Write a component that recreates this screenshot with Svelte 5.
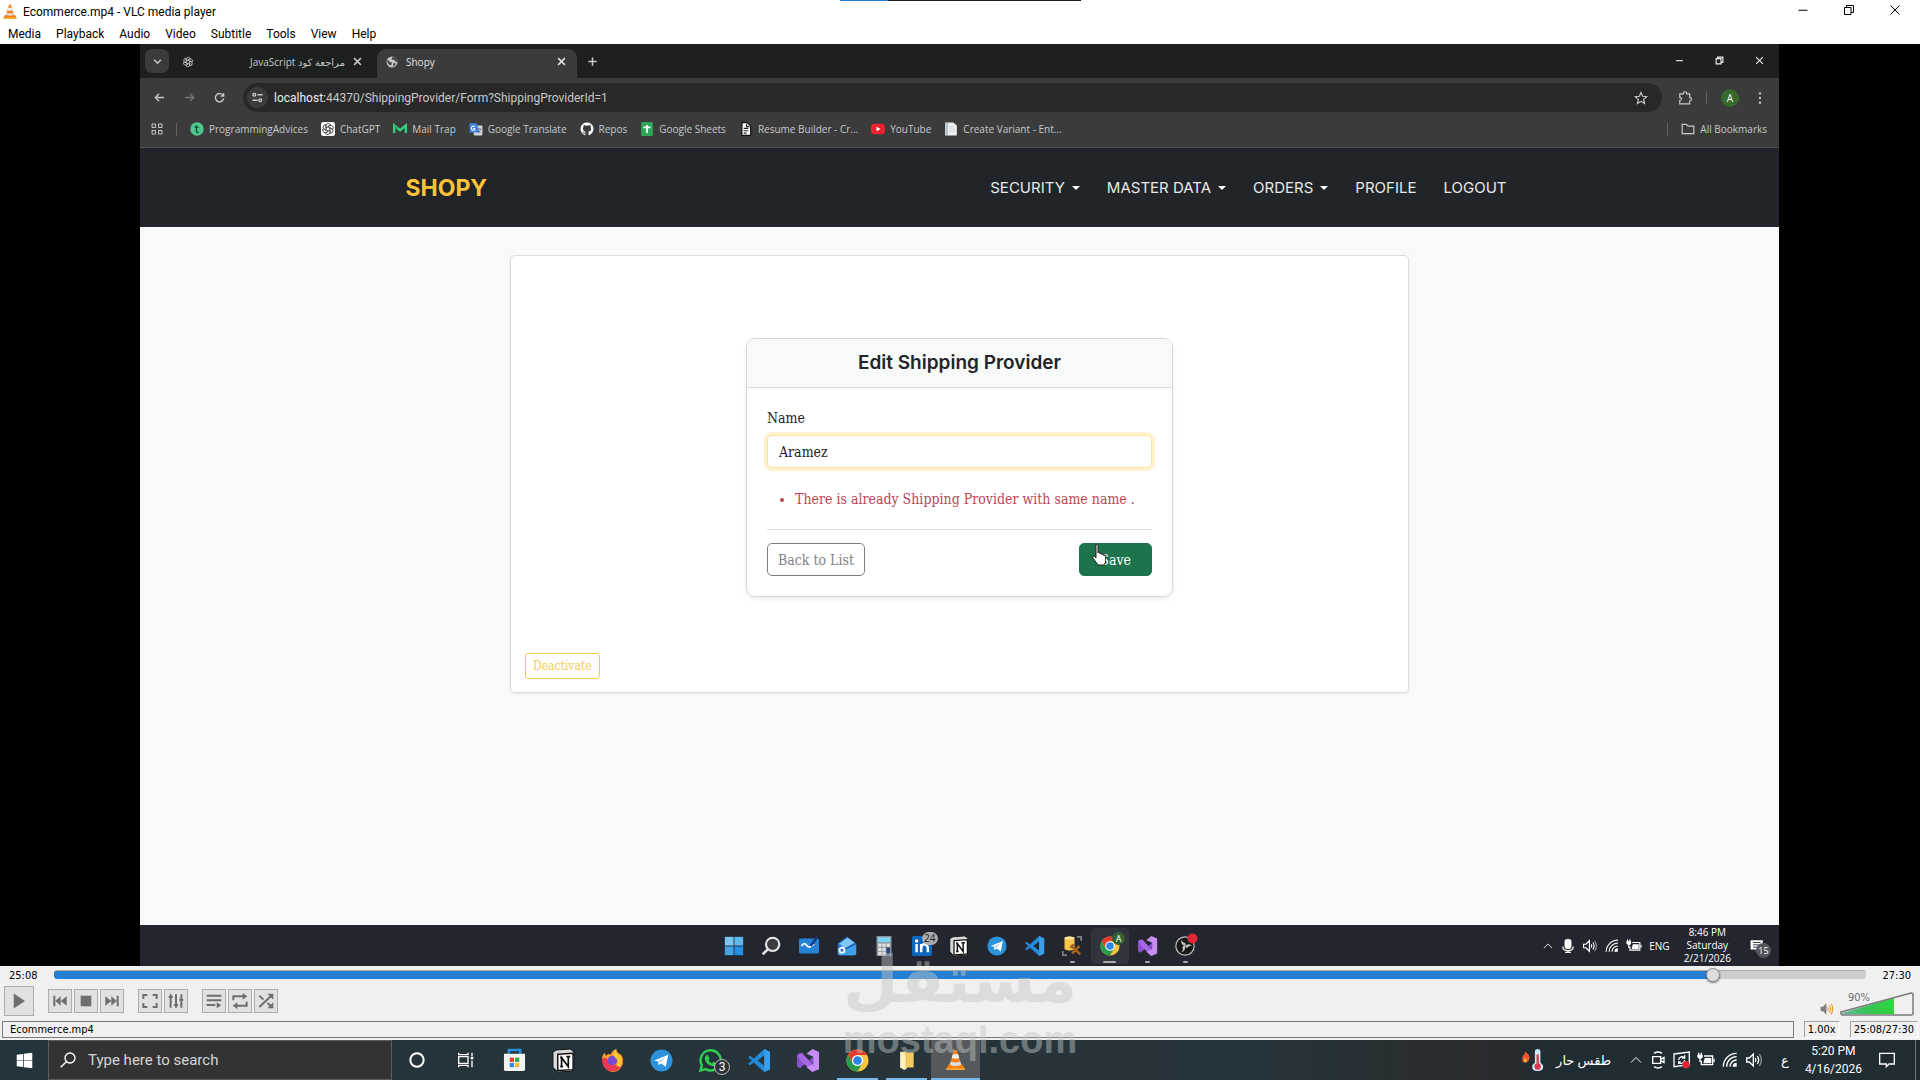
<script>
  const vlcMenu = ["Media", "Playback", "Audio", "Video", "Subtitle", "Tools", "View", "Help"];

  const bookmarks = [
    { icon: "advices", title: "ProgrammingAdvices" },
    { icon: "chatgpt", title: "ChatGPT" },
    { icon: "mailtrap", title: "Mail Trap" },
    { icon: "translate", title: "Google Translate" },
    { icon: "github", title: "Repos" },
    { icon: "sheets", title: "Google Sheets" },
    { icon: "resume", title: "Resume Builder - Cr..." },
    { icon: "youtube", title: "YouTube" },
    { icon: "page", title: "Create Variant - Ent..." },
  ];

  const siteLinks = [
    { title: "SECURITY", dropdown: true },
    { title: "MASTER DATA", dropdown: true },
    { title: "ORDERS", dropdown: true },
    { title: "PROFILE" },
    { title: "LOGOUT" },
  ];

  const recordedApps = [
    { icon: "win11" },
    { icon: "lens" },
    { icon: "whiteboard" },
    { icon: "mail" },
    { icon: "calc" },
    { icon: "linkedin", badge: "24", kind: "grey" },
    { icon: "notion" },
    { icon: "telegram" },
    { icon: "vscode" },
    { icon: "dbtools", running: true },
    { icon: "chrome", running: true, active: true, badge: "A", kind: "green" },
    { icon: "vs", running: true },
    { icon: "obs", running: true },
  ];

  const vlcGroups = [
    ["prev", "stop", "next"],
    ["fullscreen", "equalizer"],
    ["playlist", "loop", "shuffle"],
  ];

  const pinnedApps = [
    { icon: "cortana" },
    { icon: "taskview" },
    { icon: "store" },
    { icon: "notion" },
    { icon: "firefox" },
    { icon: "telegram" },
    { icon: "whatsapp", badge: "3" },
    { icon: "vscode" },
    { icon: "vs" },
    { icon: "chrome", running: true },
    { icon: "folder", running: true },
    { icon: "cone", running: true, active: true },
  ];

  let providerName = $state("Aramez");
  let search = $state("");
  let position = $state(1516);
  const duration = 1650;
  let played = $derived((position / duration) * 100);
</script>

{#snippet icon(name)}
  <svg class="icon {name}" viewBox="0 0 24 24" aria-hidden="true">
    {#if name === "cone"}
      <path d="M3 19l2-3h14l2 3 1 3H2z" fill="#f57c00" />
      <path d="M10.500 1h3l5 17q-6.500 3-13 0z" fill="#f58220" />
      <path d="M9.200 5.500h5.600l1.200 4q-4 1.500-8 0z" fill="#eee" />
      <path d="M7 13q5 2 10 0l1 3.500q-6 2.500-12 0z" fill="#ddd" />
      <path d="M2.500 21h19" stroke="#ffb43c" stroke-width="1.500" />
    {:else if name === "minimize"}
      <path d="M3 12.500h18" class="line" />
    {:else if name === "restore"}
      <path d="M3 7h13v14H3zM7 7V3h14v14h-5" class="line" />
    {:else if name === "close"}
      <path d="M3 3l18 18M21 3L3 21" class="line" />
    {:else if name === "chevdown"}
      <path d="M3 7.500l9 9 9-9" class="line" />
    {:else if name === "chevup"}
      <path d="M2 17l10-10 10 10" class="line" />
    {:else if name === "plus"}
      <path d="M12 1v22M1 12h22" class="line" />
    {:else if name === "globe"}
      <circle cx="12" cy="12" r="11" fill="#c4c7c5" />
      <path d="M3 7l5 5 4 1-1 4-3 2-3-3-3-5zM13 2l-2 4 3 2 3-1 1 4 4 1 1-3-4-6zM15 14l5 1-3 5-3 1z" fill="#45484a" />
    {:else if name === "back"}
      <path d="M22 12H3M11 4l-8 8 8 8" class="line" />
    {:else if name === "forward"}
      <path d="M2 12h19M13 4l8 8-8 8" class="line" />
    {:else if name === "reload"}
      <path d="M20 8a9 9 0 1 0 1 6M21 2v7h-7" class="line" />
    {:else if name === "tune"}
      <path d="M12 6h11M1 18h11" class="line" />
      <circle cx="5" cy="6" r="3" class="line" />
      <circle cx="18" cy="18" r="3" class="line" />
    {:else if name === "star"}
      <path d="M12 2.500l2.800 6.500 7 .7-5.300 4.700 1.600 7L12 17.700l-6.100 3.700 1.600-7L2.200 9.700l7-.7z" class="line" />
    {:else if name === "puzzle"}
      <path d="M3 5h6c0-5 6-5 6 0h5v6c4 0 4 6 0 6v5H3v-6c4 0 4-5 0-5z" class="line" />
    {:else if name === "more"}
      <circle cx="12" cy="4" r="2" fill="currentColor" />
      <circle cx="12" cy="12" r="2" fill="currentColor" />
      <circle cx="12" cy="20" r="2" fill="currentColor" />
    {:else if name === "apps"}
      <path d="M2 2h7v7H2zM15 2h7v7h-7zM2 15h7v7H2zM15 15h7v7h-7z" class="line" />
    {:else if name === "directory"}
      <path d="M2 4h7l3 3h10v13H2z" class="line" />
    {:else if name === "advices"}
      <circle cx="12" cy="12" r="11.500" fill="#52c48d" />
      <path d="M11 5v11q0 2 4 2M8 9h7" fill="none" stroke="#17563a" stroke-width="2.500" />
    {:else if name === "chatgpt" || name === "openai"}
      {#if name === "chatgpt"}
        <rect width="24" height="24" rx="4" fill="#fff" />
      {/if}
      <g fill="none" stroke={name === "chatgpt" ? "#444" : "#d0d0d0"} stroke-width="1.500">
        {#each [0, 60, 120, 180, 240, 300] as angle}
          <path d="M12 8.500l-3.500 2V6q1-4 5-3.500 2 .5 3 2.500L12 8" transform="rotate({angle} 12 12)" />
        {/each}
      </g>
    {:else if name === "mailtrap"}
      <path d="M2 19V6l10 8 10-8v13" fill="none" stroke="#35d07f" stroke-width="4" />
      <path d="M2 6l5 4v3z" fill="#127a4a" />
    {:else if name === "translate"}
      <rect x="8" y="6" width="15" height="17" rx="2" fill="#d6d9dc" />
      <path d="M1 2h12l5 16H1z" fill="#3f82e8" />
      <path d="M10 8a3.500 3.500 0 1 0 0 5v-2H7" fill="none" stroke="#fff" stroke-width="1.800" />
      <path d="M13 12h8M17 10v2M20 12q-1 5-5 7M15 14l5 5" fill="none" stroke="#67727e" stroke-width="1.300" />
    {:else if name === "github"}
      <path d="M12 1A11 11 0 0 0 8.500 22.500c.6.1.8-.2.8-.5v-2.200c-3 .7-3.700-1.400-3.700-1.400-.5-1.200-1.200-1.600-1.200-1.600-1-.7.1-.7.1-.7 1.100.1 1.700 1.200 1.700 1.200 1 1.700 2.600 1.200 3.200.9.100-.7.400-1.200.7-1.500-2.500-.3-5-1.200-5-5.500 0-1.200.4-2.200 1.100-3-.1-.3-.5-1.400.1-3 0 0 1-.3 3 1.100a10.400 10.400 0 0 1 5.500 0c2-1.400 3-1.100 3-1.100.6 1.600.2 2.700.1 3 .7.800 1.100 1.800 1.100 3 0 4.300-2.600 5.200-5.100 5.500.4.400.8 1 .8 2.100V22c0 .3.200.6.800.5A11 11 0 0 0 12 1z" fill="#fff" />
    {:else if name === "sheets"}
      <rect x="2" width="20" height="24" rx="2" fill="#2da55b" />
      <path d="M6 9h12M12 5v14" stroke="#fff" stroke-width="3" />
    {:else if name === "resume"}
      <path d="M5 1h9l6 6v16H5z" fill="#fff" stroke="#111" stroke-width="2" />
      <path d="M8 11h8M8 15h8M8 19h5M13 3v5h5" fill="none" stroke="#222" stroke-width="2" />
    {:else if name === "youtube"}
      <rect x="0" y="3" width="24" height="18" rx="6" fill="#e8222e" />
      <path d="M9.500 8l7 4-7 4z" fill="#fff" />
    {:else if name === "page"}
      <path d="M2 1h14l6 5v17H2z" fill="#eee" />
      <path d="M5 1v22" stroke="#7ca6cf" stroke-width="2" />
      <path d="M9 8h8M9 12h10M9 16h10" stroke="#c2c2c2" />
    {:else if name === "win11"}
      <path d="M1 1h10.500v10.500H1z" fill="#77c8f6" />
      <path d="M12.500 1H23v10.500H12.500z" fill="#62b7ef" />
      <path d="M1 12.500h10.500V23H1z" fill="#43a3e9" />
      <path d="M12.500 12.500H23V23H12.500z" fill="#2490e4" />
    {:else if name === "lens"}
      <circle cx="14" cy="10" r="8" fill="#3b3d42" stroke="#e8e8e8" stroke-width="2.500" />
      <path d="M8 16l-6 6" stroke="#e8e8e8" stroke-width="3" />
    {:else if name === "whiteboard"}
      <rect y="3" width="24" height="18" rx="2" fill="#2584d8" />
      <path d="M3 12q3-5 6-1t6 1q2-2 3-1" fill="none" stroke="#fff" stroke-width="2" />
      <path d="M14 12l8-11" stroke="#26357b" stroke-width="3" />
    {:else if name === "mail"}
      <path d="M1 9L12 1l11 8v12q0 2-2 2H3q-2 0-2-2z" fill="#287ed2" />
      <path d="M3 9l10-7 8 6-12 7z" fill="#7fc7f5" />
      <path d="M1 13l10 2 12-6v12q0 2-2 2H3q-2 0-2-2z" fill="#3da0eb" />
      <path d="M1 13l10 2 12-6" fill="none" stroke="#1c57a8" stroke-width="1.500" />
      <circle cx="6" cy="17" r="3" fill="#2d78c8" stroke="#fff" stroke-width="2" />
    {:else if name === "calc"}
      <rect x="3" y="0" width="18" height="24" fill="#8c9196" />
      <rect x="4.500" y="1.500" width="15" height="6" fill="#7fd2f7" />
      <path d="M5 9h4v4H5zM10 9h4v4h-4zM15 9h4v4h-4zM5 14h4v4H5zM10 14h4v4h-4zM5 19h4v4H5zM10 19h4v4h-4z" fill="#e2e2e2" />
      <path d="M15 14h4v9h-4z" fill="#1d3e86" />
    {:else if name === "linkedin"}
      <rect width="24" height="24" rx="2" fill="#0d66bd" />
      <circle cx="5.500" cy="6" r="2" fill="#fff" />
      <path d="M5.500 9.500v10M11 19.500v-10M11 14q1-4 4-4t4 4v5.500" fill="none" stroke="#fff" stroke-width="3" />
    {:else if name === "notion"}
      <path d="M1 3l4-2 14-1 4 3v18l-2 2-15 1-5-5z" fill="#d9d9d9" stroke="#111" />
      <path d="M6 5.500l16-1v17l-16 1z" fill="#fff" stroke="#111" stroke-width="1.500" />
      <path d="M10 18.500V9l7 9.500V8M8.500 9H11M15 8h4M8.500 18.500h3" fill="none" stroke="#111" stroke-width="1.800" />
    {:else if name === "telegram"}
      <circle cx="12" cy="12" r="11.500" fill="#2c92dc" />
      <path d="M4.500 12L19 6l-2.500 12.500-5-3.500-2.500 2-.5-4z" fill="#fff" />
      <path d="M8.500 13l8-5-6 6" fill="#a8cbe8" />
    {:else if name === "vscode"}
      <path d="M17 0l6 3v18l-6 3L6 14l-4 3-2-1.500L4 12 0 8.500 2 7l4 3zM17 6.500L10 12l7 5.500z" fill="#2489d6" fill-rule="evenodd" />
      <path d="M17 0l6 3v18l-6 3z" fill="#3a9ee9" />
    {:else if name === "dbtools"}
      <path d="M3 2q6-3 12 0v14q-6 3-12 0z" fill="#f8c64c" />
      <ellipse cx="9" cy="2.500" rx="6" ry="2" fill="#fde39a" />
      <path d="M18 1h5v5M1 18v5h5" fill="none" stroke="#9da3a3" stroke-width="1.500" />
      <path d="M12 21l9-9M11 12l11 10M10 14l4-4" stroke="#a5601f" stroke-width="3" />
    {:else if name === "chrome"}
      <circle cx="12" cy="12" r="11.500" fill="#f9c53a" />
      <path d="M2 6.300A11.500 11.500 0 0 1 22 6.300H12L7 15z" fill="#e33b2e" />
      <path d="M2 6.300A11.500 11.500 0 0 0 12 23.500L17 15H7z" fill="#259b4b" />
      <circle cx="12" cy="12" r="5.800" fill="#fff" />
      <circle cx="12" cy="12" r="4.500" fill="#2b86e8" />
    {:else if name === "vs"}
      <path d="M0 6l3-2 14 12V8L3 20l-3-2z" fill="#8d4fd0" />
      <path d="M1 7l4-3 13 14-2 6-12-12z" fill="#a768e6" />
      <path d="M16 0l7 3v18l-7 3-6-5 7-3V8l-7-3z" fill="#c88cf5" />
    {:else if name === "obs"}
      <circle cx="12" cy="12" r="11" fill="#17181a" stroke="#bcbcbc" stroke-width="1.500" />
      <g fill="#c8c8c8">
        {#each [0, 120, 240] as angle}
          <path d="M12 12q-6-2-4-8 0 4 4 4.500 2 1.500 0 3.500z" transform="rotate({angle} 12 12)" />
        {/each}
      </g>
      <circle cx="21" cy="3" r="6" fill="#e32636" />
    {:else if name === "mic"}
      <rect x="6" y="0" width="12" height="17" rx="5" fill="currentColor" />
      <path d="M3 13q0 7 9 7t9-7M12 20v3M7 23h10" class="line" />
    {:else if name === "volume"}
      <path d="M1 9h4l6-6v18l-6-6H1z" class="line" />
      <path d="M14 9q2 3 0 6M17 6q4 6 0 12" class="line" />
      <path d="M20 3q6 9 0 18" class="line dim" />
    {:else if name === "wifi"}
      <path d="M2 22A20 20 0 0 1 22 2M7 22A15 15 0 0 1 22 7M12 22A10 10 0 0 1 22 12" class="line" />
      <path d="M16 22a6 6 0 0 1 6-6v6z" fill="currentColor" />
    {:else if name === "battery"}
      <path d="M9 6h13v13H5v-5" class="line" />
      <path d="M10 9h10v8H8z" fill="currentColor" />
      <path d="M23 10h2v5h-2zM-1 4h8v4q-3 5-8 0zM0 1h2v3H0zM4 1h2v3H4z" fill="currentColor" />
      <path d="M3 9v5h3" class="line" />
    {:else if name === "notes"}
      <path d="M1 2h21v16h-8l-4 4v-4H1z" fill="currentColor" />
      <path d="M5 6h13M5 10h13M5 14h8" stroke="#23262f" stroke-width="1.500" />
    {:else if name === "action"}
      <path d="M1 2h22v16h-8l-4 4v-4H1z" class="line" />
    {:else if name === "play"}
      <path d="M5 2l15 10L5 22z" fill="currentColor" />
    {:else if name === "prev"}
      <path d="M2 4h3v16H2zM13 5v14l-8-7zM22 5v14l-9-7z" fill="currentColor" />
    {:else if name === "next"}
      <path d="M19 4h3v16h-3zM11 5v14l8-7zM2 5v14l9-7z" fill="currentColor" />
    {:else if name === "stop"}
      <path d="M4 4h16v16H4z" fill="currentColor" />
    {:else if name === "fullscreen"}
      <path d="M2 9V3h6M16 3h6v6M22 15v6h-6M8 21H2v-6" fill="none" stroke="currentColor" stroke-width="3" />
    {:else if name === "equalizer"}
      <path d="M4 2v20M12 2v20M20 2v20M1 6h6M9 18h6M17 10h6" fill="none" stroke="currentColor" stroke-width="3" />
    {:else if name === "playlist"}
      <path d="M1 4h22M1 11h22M1 18h13" stroke="currentColor" stroke-width="3" />
      <path d="M16 14l7 4.500-7 4.500z" fill="currentColor" />
    {:else if name === "loop"}
      <path d="M2 11V5h15M22 13v6H7" fill="none" stroke="currentColor" stroke-width="3" />
      <path d="M16 0l7 5-7 5zM8 14l-7 5 7 5z" fill="currentColor" />
    {:else if name === "shuffle"}
      <path d="M2 21L20 4M2 4l6 6M14 15l6 5" stroke="currentColor" stroke-width="3" />
      <path d="M14 1h9v9zM14 23h9v-9z" fill="currentColor" />
    {:else if name === "speaker"}
      <path d="M1 8h4l6-6v20l-6-6H1z" fill="#808080" />
      <path d="M13 9q2 3 0 6M16 6q4 6 0 12M19 3q6 9 0 18" fill="none" stroke="#f39a21" stroke-width="2" />
    {:else if name === "win10"}
      <path d="M1 4l9-1.300v8.800H1zM11 2.500L23 1v10.500H11zM1 12.500h9v8.800L1 20zM11 12.500h12V23l-12-1.500z" fill="#fff" />
    {:else if name === "searchlens"}
      <circle cx="15" cy="9" r="7.500" class="line" />
      <path d="M9.500 14.500L1 23" class="line" />
    {:else if name === "cortana"}
      <circle cx="12" cy="12" r="10" fill="none" stroke="#fff" stroke-width="3" />
    {:else if name === "taskview"}
      <path d="M1 1v3h14V1M1 23v-3h14v3M1 7h14v10H1zM21 1v5M21 13v10" class="line" />
      <path d="M19 7h4v4h-4z" fill="#fff" />
    {:else if name === "store"}
      <path d="M6 5V1h12v4" fill="none" stroke="#2a8fdf" stroke-width="2.500" />
      <path d="M1 5h22v16q0 2-2 2H3q-2 0-2-2z" fill="#f3f3f3" />
      <path d="M7 9h4.500v4.500H7z" fill="#e8452f" />
      <path d="M12.500 9H17v4.500h-4.500z" fill="#36a852" />
      <path d="M7 14.500h4.500V19H7z" fill="#2690df" />
      <path d="M12.500 14.500H17V19h-4.500z" fill="#f5bb30" />
    {:else if name === "firefox"}
      <path d="M1 11q0-5 3-7l1 3 3-2 2 1q2-5 6-6 0 3 3 5l2 1q3 5 2 9-3 9-11 9T1 11z" fill="#ff9a2e" />
      <path d="M1 11q2-3 6 0 1 6 7 6 6-1 9-6 0 9-8 12-13 2-14-12z" fill="#ec3850" />
      <circle cx="12" cy="12" r="5" fill="#7a4bd0" />
      <path d="M15 0q0 4 4 6 5 5 2 12-3 2-5-1 3-5-1-8-4-4 0-9z" fill="#ffc634" />
    {:else if name === "whatsapp"}
      <path d="M1.500 22.500L3 17A10.500 10.500 0 1 1 7 21z" fill="none" stroke="#2fd04f" stroke-width="2.500" />
      <path d="M7 7l2-1 2 4-1 2q1 2 3.500 3l1.500-2 3 2q0 3-3 3-8-1-9-8z" fill="#2fd04f" />
    {:else if name === "folder"}
      <path d="M4 2h7l1 20-3 2-5-3z" fill="#ffe49a" />
      <path d="M8 3h12v18h-9V6z" fill="#f3cb63" />
      <path d="M4 2l5 3v19l-5-3z" fill="#fff0bf" />
    {:else if name === "weather"}
      <path d="M1 15q-4-5 0-9 1 1 1-3 6 3 5 8-1 4-6 4z" fill="#f0542d" />
      <path d="M2 14q-2-2 0-4 3 2 2 4z" fill="#ffc23b" />
      <path d="M13 3q0-3 3-3t3 3v12q3 2 3 4 0 5-6 5t-6-5q0-2 3-4z" fill="#c9ecfb" />
      <path d="M16 6v10" stroke="#e03648" stroke-width="2.500" />
      <circle cx="16" cy="19" r="3.500" fill="#e03648" />
    {:else if name === "meet"}
      <path d="M4 7h12v10H4zM16 11l5-3v8l-5-3M6 2q6-4 12 0M6 22q6 4 12 0" class="line" />
    {:else if name === "sync"}
      <path d="M0 3l23-3v19L0 22zM7 12a5 5 0 0 1 9-3M16 5v4h-4M16 12a5 5 0 0 1-9 3M7 18v-3h3" class="line" />
      <circle cx="18" cy="19" r="5.500" fill="#e32636" />
    {/if}
  </svg>
{/snippet}

<div class="desktop">
  <section class="player">
    <div class="capture-strip"></div>
    <header class="titlebar">
      <div class="title">{@render icon("cone")}<span>Ecommerce.mp4 - VLC media player</span></div>
      <div class="window-buttons">
        <button aria-label="Minimize">{@render icon("minimize")}</button>
        <button aria-label="Restore">{@render icon("restore")}</button>
        <button aria-label="Close">{@render icon("close")}</button>
      </div>
    </header>

    <nav class="menubar">
      {#each vlcMenu as item}
        <button>{item}</button>
      {/each}
    </nav>

    <main class="video">
      <div class="browser">
        <div class="tabstrip">
          <button class="tab-search" aria-label="Search tabs">{@render icon("chevdown")}</button>
          <div class="tab">
            {@render icon("openai")}
            <span class="tab-title" dir="rtl">مراجعة كود JavaScript</span>
            <button aria-label="Close tab">{@render icon("close")}</button>
          </div>
          <div class="tab active">
            {@render icon("globe")}
            <span class="tab-title">Shopy</span>
            <button aria-label="Close tab">{@render icon("close")}</button>
          </div>
          <button class="new-tab" aria-label="New tab">{@render icon("plus")}</button>
          <div class="browser-window-buttons">
            <button aria-label="Minimize">{@render icon("minimize")}</button>
            <button aria-label="Restore">{@render icon("restore")}</button>
            <button aria-label="Close">{@render icon("close")}</button>
          </div>
        </div>

        <div class="toolbar">
          <div class="history">
            <button aria-label="Back">{@render icon("back")}</button>
            <button aria-label="Forward" class="disabled">{@render icon("forward")}</button>
            <button aria-label="Reload">{@render icon("reload")}</button>
          </div>
          <div class="omnibox">
            <button class="site-info" aria-label="Site information">{@render icon("tune")}</button>
            <a class="url" href="#address"><b>localhost:</b>44370/ShippingProvider/Form?ShippingProviderId=1</a>
            <button aria-label="Bookmark this tab">{@render icon("star")}</button>
          </div>
          <div class="toolbar-actions">
            <button aria-label="Extensions">{@render icon("puzzle")}</button>
            <span class="divider"></span>
            <button class="avatar">A</button>
            <button aria-label="Menu">{@render icon("more")}</button>
          </div>
        </div>

        <div class="bookmarks">
          {@render icon("apps")}
          <span class="divider"></span>
          {#each bookmarks as bookmark}
            <a href="#bookmark">{@render icon(bookmark.icon)}<span>{bookmark.title}</span></a>
          {/each}
          <div class="all-bookmarks">
            <span class="divider"></span>
            <a href="#all">{@render icon("directory")}<span>All Bookmarks</span></a>
          </div>
        </div>

        <div class="site">
          <header class="site-header">
            <div class="site-container">
              <a class="brand" href="#home">SHOPY</a>
              <nav>
                {#each siteLinks as link}
                  <a href="#nav" class:dropdown={link.dropdown}>{link.title}</a>
                {/each}
              </nav>
            </div>
          </header>

          <div class="panel">
            <form class="card" onsubmit={(e) => e.preventDefault()}>
              <h1>Edit Shipping Provider</h1>
              <div class="card-body">
                <label for="provider-name">Name</label>
                <input id="provider-name" type="text" bind:value={providerName} />
                <ul class="errors">
                  <li>There is already Shipping Provider with same name .</li>
                </ul>
                <hr />
                <div class="actions">
                  <a class="btn outline" href="#list">Back to List</a>
                  <button class="btn save" type="submit">
                    Save
                    <svg class="pointer" viewBox="0 0 14 22" aria-hidden="true">
                      <path
                        d="M4 1.500q0-1 1-1t1 1V9q0-1 1-1t1 1v1q0-1 1-1t1 1v1q0-1 1-1t1 1v1q0-1 1-1 .8.1.8 1v4q0 3-2 5H6L1 14q-1-1.500 0-2t3 2z"
                        fill="#fff"
                        stroke="#222"
                      />
                    </svg>
                  </button>
                </div>
              </div>
            </form>
            <button class="deactivate">Deactivate</button>
          </div>
        </div>

        <footer class="recorded-taskbar">
          <div class="recorded-apps">
            {#each recordedApps as app}
              <button aria-label={app.icon} class:running={app.running} class:active={app.active}>
                {@render icon(app.icon)}
                {#if app.badge}
                  <span class="badge {app.kind}">{app.badge}</span>
                {/if}
              </button>
            {/each}
          </div>
          <div class="recorded-tray">
            {@render icon("chevup")}
            {@render icon("mic")}
            {@render icon("volume")}
            {@render icon("wifi")}
            {@render icon("battery")}
            <span>ENG</span>
            <div class="recorded-clock">
              <span>8:46 PM</span>
              <span>Saturday</span>
              <span>2/21/2026</span>
            </div>
            <div class="recorded-notes">
              {@render icon("notes")}
              <span class="count">15</span>
            </div>
          </div>
        </footer>
      </div>
    </main>

    <div class="controls">
      <div class="seek">
        <span>25:08</span>
        <input
          type="range"
          min="0"
          max={duration}
          bind:value={position}
          aria-label="Position"
          style="--played: {played}%"
        />
        <span>27:30</span>
      </div>
      <div class="buttons">
        <button class="play-button" aria-label="Play">{@render icon("play")}</button>
        {#each vlcGroups as group}
          <div class="group">
            {#each group as name}
              <button aria-label={name}>{@render icon(name)}</button>
            {/each}
          </div>
        {/each}
        <div class="volume-box">
          <button aria-label="Mute">{@render icon("speaker")}</button>
          <div class="wedge">
            <svg viewBox="0 0 74 24" aria-hidden="true">
              <defs>
                <linearGradient id="level">
                  <stop offset="0" stop-color="#65b7a0" />
                  <stop offset="0.500" stop-color="#33c653" />
                  <stop offset="1" stop-color="#2fd53c" />
                </linearGradient>
              </defs>
              <path d="M2 21L54 6v16H2z" fill="url(#level)" />
              <path d="M1 20L71 1q2 0 2 2v18q0 2-2 2H2q-2-2-1-3z" fill="none" stroke="#7b7b7b" stroke-width="1.500" />
            </svg>
            <span>90%</span>
          </div>
        </div>
      </div>
      <div class="status">
        <span class="status-name">Ecommerce.mp4</span>
        <span class="status-cell">1.00x</span>
        <span class="status-cell">25:08/27:30</span>
      </div>
    </div>
  </section>

  <footer class="taskbar">
    <button class="start" aria-label="Start">{@render icon("win10")}</button>
    <label class="search">
      {@render icon("searchlens")}
      <input type="text" placeholder="Type here to search" aria-label="Search" bind:value={search} />
    </label>
    <div class="pinned">
      {#each pinnedApps as app}
        <button aria-label={app.icon} class:running={app.running} class:active={app.active}>
          {@render icon(app.icon)}
          {#if app.badge}
            <span class="badge">{app.badge}</span>
          {/if}
        </button>
      {/each}
    </div>
    <div class="tray">
      <div class="weather-box">
        {@render icon("weather")}
        <span dir="rtl">طقس حار</span>
      </div>
      {@render icon("chevup")}
      {@render icon("meet")}
      {@render icon("sync")}
      {@render icon("battery")}
      {@render icon("wifi")}
      {@render icon("volume")}
      <span class="language">ع</span>
      <div class="clock">
        <span>5:20 PM</span>
        <span>4/16/2026</span>
      </div>
      <button class="action-center" aria-label="Notifications">{@render icon("action")}</button>
    </div>
  </footer>

  <div class="watermark">
    <span class="mark" dir="rtl">مستقل</span>
    <span class="domain">mostaql.com</span>
  </div>
</div>

<style>
  :global(body) {
    margin: 0;
    background: #000;
  }

  .desktop {
    --ui: Roboto, "Noto Sans", "DejaVu Sans", sans-serif;
    --ui-small: "Open Sans", "Noto Sans", "DejaVu Sans", sans-serif;
    position: relative;
    display: flex;
    flex-direction: column;
    min-height: 100vh;
    font-family: var(--ui);
    font-size: 12px;
    color: #000;
  }

  .desktop * {
    box-sizing: border-box;
  }

  button {
    display: flex;
    align-items: center;
    justify-content: center;
    padding: 0;
    border: 0;
    background: none;
    color: inherit;
    font: inherit;
  }

  a {
    color: inherit;
    text-decoration: none;
  }

  .icon {
    display: block;
    flex: none;
    width: 14px;
    height: 14px;
    overflow: visible;
  }

  .line {
    fill: none;
    stroke: currentColor;
    stroke-width: 2;
  }

  .dim {
    opacity: 0.5;
  }

  .player {
    flex: 1;
    display: flex;
    flex-direction: column;
    background: #fff;
  }

  /* screen share marker on the top edge */
  .capture-strip {
    position: absolute;
    top: 0;
    left: 50%;
    width: 241px;
    height: 1px;
    margin-left: -120px;
    background: linear-gradient(90deg, #1e7fd6 48px, #1c1c1c 48px);
  }

  .titlebar {
    display: flex;
    justify-content: space-between;
    height: 23px;
  }

  .title {
    display: flex;
    align-items: center;
    gap: 5px;
    padding-left: 2px;
  }

  .title .icon {
    width: 16px;
    height: 16px;
  }

  .window-buttons {
    display: flex;
    height: 20px;
    padding-right: 2px;
  }

  .window-buttons button {
    width: 46px;
  }

  .window-buttons .icon {
    width: 12px;
    height: 12px;
  }

  .menubar {
    display: flex;
    gap: 15px;
    height: 21px;
    padding-left: 8px;
  }

  .video {
    flex: 1;
    display: flex;
    padding: 0 141px 0 140px;
    background: #000;
  }

  .browser {
    flex: 1;
    display: flex;
    flex-direction: column;
    background: #f8faf9;
    color: #c7cac9;
    font-family: var(--ui-small);
    font-size: 10px;
  }

  .tabstrip {
    display: flex;
    height: 34px;
    padding: 5px 0 0 5px;
    background: #1e201f;
  }

  .tab-search {
    width: 24px;
    height: 24px;
    border-radius: 7px;
    background: #3a3b3b;
  }

  .tab-search .icon,
  .tab .icon.close,
  .new-tab .icon,
  .browser-window-buttons .icon {
    width: 9px;
    height: 9px;
  }

  .tabstrip .line {
    stroke-width: 4;
  }

  .tab {
    display: flex;
    align-items: center;
    gap: 8px;
    width: 200px;
    margin-left: 4px;
    padding: 0 11px 4px 9px;
  }

  .tab.active {
    border-radius: 9px 9px 0 0;
    background: #3b3b3b;
    color: #e3e3e3;
  }

  .tab-title {
    flex: 1;
  }

  .tab .icon {
    width: 12px;
    height: 12px;
  }

  .new-tab {
    width: 30px;
    height: 24px;
  }

  .browser-window-buttons {
    display: flex;
    height: 22px;
    margin-left: auto;
    color: #eee;
  }

  .browser-window-buttons button {
    width: 40px;
  }

  .browser-window-buttons .line {
    stroke-width: 3;
  }

  .toolbar {
    display: flex;
    align-items: center;
    height: 39px;
    background: #3b3b3b;
  }

  .toolbar .line {
    stroke-width: 3;
  }

  .history {
    display: flex;
    width: 103px;
    padding-left: 4px;
  }

  .history button {
    width: 30px;
  }

  .history .icon {
    width: 11px;
    height: 11px;
  }

  .history .disabled {
    opacity: 0.4;
  }

  .omnibox {
    flex: 1;
    display: flex;
    align-items: center;
    height: 29px;
    padding: 0 14px 0 4px;
    border-radius: 15px;
    background: #282828;
  }

  .site-info {
    width: 21px;
    height: 21px;
    border-radius: 50%;
    background: #3b3b3b;
  }

  .site-info .icon {
    width: 11px;
    height: 11px;
  }

  .url {
    flex: 1;
    padding-left: 6px;
    font-family: var(--ui);
    font-size: 12px;
  }

  .url b {
    color: #ececec;
    font-weight: 400;
  }

  .toolbar-actions {
    display: flex;
    align-items: center;
    gap: 14px;
    padding: 0 12px 0 16px;
  }

  .toolbar-actions .line,
  .omnibox .star .line {
    stroke-width: 2;
  }

  .divider {
    width: 1px;
    height: 13px;
    background: #5d646c;
  }

  .avatar {
    width: 18px;
    height: 18px;
    border-radius: 50%;
    background: #38692c;
    color: #fff;
  }

  .bookmarks {
    display: flex;
    align-items: center;
    gap: 13px;
    height: 31px;
    padding: 0 12px 6px 11px;
    border-bottom: 1px solid #50555a;
    background: #3b3b3b;
  }

  .bookmarks .apps {
    width: 12px;
    height: 12px;
  }

  .bookmarks a {
    display: flex;
    align-items: center;
    gap: 5px;
  }

  .all-bookmarks {
    display: flex;
    align-items: center;
    gap: 13px;
    margin-left: auto;
  }

  .site {
    flex: 1;
    font-family: "DejaVu Serif Condensed", "DejaVu Serif", serif;
    font-size: 14px;
    line-height: 20px;
    color: #212529;
  }

  .site-header {
    padding: 0 20px;
    background: #212428;
    font-family: Inter, "Liberation Sans", sans-serif;
  }

  .site-container {
    display: flex;
    align-items: center;
    justify-content: space-between;
    max-width: 1128px;
    height: 79px;
    margin: 0 auto;
    padding: 0 17px 0 10px;
  }

  .brand {
    color: #fec33a;
    font-size: 23px;
    font-weight: 700;
  }

  .site-header nav {
    display: flex;
    gap: 27px;
    color: #e8e8e8;
    font-size: 15px;
  }

  .dropdown {
    display: flex;
    align-items: center;
    gap: 7px;
  }

  .dropdown::after {
    content: "";
    border: 4px solid transparent;
    border-top-color: #fff;
    border-bottom: 0;
  }

  .panel {
    max-width: 899px;
    margin: 28px auto 0;
    padding: 82px 14px 13px;
    border: 1px solid #dcdddd;
    border-radius: 5px;
    background: #fff;
    box-shadow: 0 1px 3px rgba(0, 0, 0, 0.08);
  }

  .card {
    max-width: 427px;
    margin: 0 auto;
    border: 1px solid #d8dada;
    border-radius: 9px;
    box-shadow: 0 2px 4px rgba(0, 0, 0, 0.08);
  }

  .card h1 {
    margin: 0;
    padding: 12px;
    border-bottom: 1px solid #d8dada;
    border-radius: 8px 8px 0 0;
    background: #f8faf9;
    font-family: Inter, "Liberation Sans", sans-serif;
    font-size: 19px;
    line-height: 24px;
    font-weight: 600;
    text-align: center;
  }

  .card-body {
    padding: 20px;
  }

  .card label {
    display: block;
    margin-bottom: 7px;
  }

  .card input {
    display: block;
    width: 100%;
    height: 33px;
    padding: 0 11px;
    border: 1px solid #ffe19c;
    border-radius: 5px;
    outline: none;
    box-shadow: 0 0 0 3px #fff3cf;
    color: inherit;
    font: inherit;
  }

  .errors {
    margin: 21px 0 20px;
    padding-left: 28px;
    color: #bd4557;
  }

  .card hr {
    height: 1px;
    margin: 0 0 13px;
    border: 0;
    background: #dcdcdc;
  }

  .actions {
    display: flex;
    justify-content: space-between;
  }

  .btn {
    position: relative;
    display: flex;
    align-items: center;
    height: 33px;
    padding: 0 10px;
    border: 1px solid #7b7f83;
    border-radius: 5px;
    color: #808386;
  }

  .btn.save {
    padding: 0 20px;
    border-color: #1c744c;
    background: #1c744c;
    color: #fff;
  }

  .pointer {
    position: absolute;
    top: 0;
    left: 12px;
    width: 14px;
    height: 22px;
  }

  .deactivate {
    margin-top: 56px;
    height: 26px;
    padding: 0 7px;
    border: 1px solid #fbc95a;
    border-radius: 3px;
    color: #f9c957;
    font-size: 12px;
  }

  .recorded-taskbar {
    display: grid;
    grid-template-columns: 1fr 489px 1fr;
    align-items: center;
    height: 41px;
    background: #23262f;
    color: #fff;
  }

  .recorded-apps {
    grid-column: 2;
    display: grid;
    grid-template-columns: repeat(13, 1fr);
  }

  .recorded-apps button {
    position: relative;
    height: 36px;
    border-radius: 4px;
  }

  .recorded-apps .icon {
    width: 20px;
    height: 20px;
  }

  .recorded-apps .active {
    background: #31343c;
  }

  .recorded-apps .running::after {
    content: "";
    position: absolute;
    bottom: 1px;
    width: 5px;
    height: 2px;
    border-radius: 1px;
    background: #a8aaae;
  }

  .recorded-apps .active::after {
    width: 13px;
  }

  .recorded-apps .badge {
    position: absolute;
    top: 4px;
    left: 19px;
    min-width: 13px;
    padding: 0 2px;
    border-radius: 8px;
    background: #a9adb0;
    color: #222;
    line-height: 13px;
    text-align: center;
  }

  .recorded-apps .badge.green {
    left: 21px;
    background: #34632f;
    color: #fff;
    font-size: 9px;
  }

  .recorded-tray {
    display: flex;
    align-items: center;
    justify-content: flex-end;
    gap: 8px;
    padding-right: 15px;
  }

  .recorded-tray .icon {
    width: 14px;
    height: 14px;
  }

  .recorded-tray .chevup {
    width: 10px;
    height: 10px;
  }

  .recorded-clock {
    display: flex;
    flex-direction: column;
    margin: 0 11px 0 6px;
    line-height: 13px;
    text-align: center;
  }

  .recorded-notes {
    position: relative;
  }

  .recorded-notes .count {
    position: absolute;
    top: 4px;
    left: 6px;
    width: 15px;
    border-radius: 50%;
    background: #53565c;
    font-size: 9px;
    line-height: 15px;
    text-align: center;
  }

  .controls {
    padding: 3px 2px 2px;
    background: #f0f0f0;
    font-family: "DejaVu Sans Condensed", "DejaVu Sans", sans-serif;
    font-size: 11px;
  }

  .seek {
    display: flex;
    align-items: flex-start;
    gap: 16px;
    height: 14px;
    padding: 0 7px;
    line-height: 14px;
  }

  .seek input {
    flex: 1;
    height: 9px;
    margin: 1px 0 0;
    appearance: none;
    border-top: 1px solid #b0a9a2;
    border-radius: 3px;
    background: linear-gradient(90deg, #247fd2 var(--played), #cdcdcd var(--played));
  }

  .seek input::-webkit-slider-thumb {
    appearance: none;
    width: 14px;
    height: 14px;
    border: 1px solid #8e8e8e;
    border-radius: 50%;
    background: #dedede;
    box-shadow: 0 1px 2px rgba(0, 0, 0, 0.5);
  }

  .buttons {
    display: flex;
    align-items: center;
    gap: 14px;
    height: 36px;
    padding: 0 4px 0 2px;
    color: #6e6e6e;
  }

  .buttons button {
    width: 24px;
    height: 24px;
    border: 1px solid #adadad;
    background: #e1e1e1;
  }

  .buttons .play-button {
    width: 30px;
    height: 30px;
  }

  .play-button .icon {
    width: 18px;
    height: 18px;
  }

  .group .icon {
    width: 16px;
    height: 16px;
  }

  .group {
    display: flex;
    gap: 2px;
  }

  .volume-box {
    display: flex;
    align-items: flex-end;
    gap: 6px;
    margin-left: auto;
    padding-top: 6px;
  }

  .volume-box button {
    width: 14px;
    height: 14px;
    border: 0;
    background: none;
  }

  .wedge {
    position: relative;
  }

  .wedge svg {
    display: block;
    width: 74px;
    height: 24px;
  }

  .wedge span {
    position: absolute;
    top: 0;
    left: 8px;
    line-height: 12px;
  }

  .status {
    display: flex;
    gap: 10px;
    margin-top: 2px;
    line-height: 15px;
  }

  .status-name {
    flex: 1;
    padding-left: 7px;
    border: 1px solid #7a7a7a;
  }

  .status-cell {
    padding: 0 3px;
    border: 1px solid #a0a0a0;
    border-right-color: #fff;
    border-bottom-color: #fff;
  }

  .taskbar {
    display: flex;
    height: 40px;
    background: linear-gradient(90deg, #23343c, #27343a 50%, #25343a 66%, #2a2b2d 77%, #1f2d33 82%, #202c31);
    color: #fff;
  }

  .taskbar .line {
    stroke-width: 2;
  }

  .start {
    width: 48px;
  }

  .start .icon {
    width: 17px;
    height: 17px;
  }

  .search {
    display: flex;
    align-items: center;
    gap: 12px;
    width: 344px;
    padding-left: 11px;
    border: 1px solid #5b5c5c;
    background: #333;
  }

  .search .icon {
    width: 16px;
    height: 16px;
  }

  .search input {
    flex: 1;
    min-width: 0;
    padding: 0;
    border: 0;
    outline: none;
    background: none;
    color: #fff;
    font: inherit;
    font-size: 15px;
  }

  .search input::placeholder {
    color: #d6d6d6;
  }

  .pinned {
    display: flex;
  }

  .pinned button {
    position: relative;
    width: 49px;
  }

  .pinned .icon {
    width: 23px;
    height: 23px;
  }

  .pinned .cortana,
  .pinned .taskview {
    width: 16px;
    height: 16px;
  }

  .pinned .folder {
    width: 20px;
    height: 20px;
  }

  .pinned .running::after {
    content: "";
    position: absolute;
    right: 4px;
    bottom: 0;
    left: 4px;
    height: 2px;
    background: #76b9ed;
  }

  .pinned .active {
    background: #56595b;
  }

  .pinned .active::after {
    right: 0;
    left: 0;
  }

  .pinned .badge {
    position: absolute;
    top: 19px;
    left: 28px;
    width: 16px;
    border: 1px solid #bbb;
    border-radius: 50%;
    background: #2d3338;
    line-height: 14px;
  }

  .tray {
    display: flex;
    align-items: center;
    gap: 8px;
    margin-left: auto;
  }

  .tray .icon {
    width: 16px;
    height: 16px;
  }

  .tray .chevup {
    width: 12px;
    height: 12px;
  }

  .weather-box {
    display: flex;
    align-items: center;
    gap: 11px;
    margin-right: 11px;
    font-size: 13px;
  }

  .tray .weather {
    width: 22px;
    height: 22px;
  }

  .language {
    margin: 0 8px 0 11px;
    font-size: 13px;
  }

  .clock {
    display: flex;
    flex-direction: column;
    line-height: 18px;
    text-align: center;
  }

  .action-center {
    height: 40px;
    margin-right: 4px;
    padding: 0 20px 0 9px;
    border-right: 1px solid #6b7478;
  }

  .watermark {
    position: absolute;
    bottom: 22px;
    left: 50%;
    display: flex;
    flex-direction: column;
    align-items: center;
    gap: 10px;
    transform: translateX(-50%);
    color: #c3c7c5;
    opacity: 0.45;
    pointer-events: none;
  }

  .mark {
    font-family: "DejaVu Sans", sans-serif;
    font-size: 64px;
    font-weight: 700;
    line-height: 64px;
  }

  .domain {
    font-family: "Liberation Sans", sans-serif;
    font-size: 38px;
    font-weight: 700;
    line-height: 36px;
  }
</style>
